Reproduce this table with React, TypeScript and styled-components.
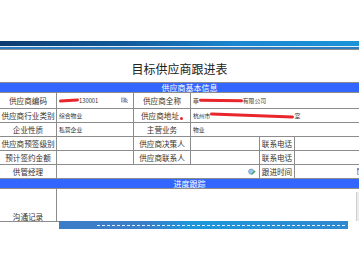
import React from "react";
import styled, { createGlobalStyle } from "styled-components";

const GlobalStyle = createGlobalStyle`
  html, body {
    margin: 0;
    padding: 0;
    background: #fff;
  }
  body {
    font-family: "Noto Sans CJK SC", "Noto Sans", sans-serif;
    overflow: hidden;
  }
`;

const Page = styled.div`
  width: 359px;
  height: 270px;
  overflow: hidden;
`;

const TopSpace = styled.div`
  height: 41px;
`;

const Band = styled.div`
  display: flex;
  flex-direction: column;
`;

const BandStripe = styled.div<{ h: number; bg: string }>`
  height: ${({ h }) => h}px;
  background: ${({ bg }) => bg};
`;

const Frame = styled.div`
  height: 171px;
  overflow: hidden;
`;

const Title = styled.div`
  height: 22px;
  padding-top: 10px;
  line-height: 18px;
  font-size: 12px;
  color: #222;
  text-align: center;
`;

const Table = styled.table`
  width: 380px;
  margin-left: -1px;
  border-collapse: collapse;
  table-layout: fixed;
`;

const Col = styled.col<{ w: number }>`
  width: ${({ w }) => w}px;
`;

const SectionCell = styled.td`
  height: 9px;
  background: #3366ff;
  border-top: 1px solid #8c8c8c;
  border-bottom: 1px solid #8c8c8c;
  color: #fff;
  font-size: 8px;
  line-height: 9px;
  text-align: center;
  padding: 0;
`;

const Row = styled.tr<{ h: number }>`
  height: ${({ h }) => h}px;
`;

const Label = styled.td`
  border: 1px solid #8c8c8c;
  padding: 0;
  font-size: 7.6px;
  line-height: 10px;
  color: #333;
  text-align: center;
  white-space: nowrap;
  overflow: hidden;
`;

const Value = styled.td`
  border: 1px solid #8c8c8c;
  padding: 0 0 0 2px;
  font-size: 5.8px;
  line-height: 10px;
  color: #333;
  white-space: nowrap;
  overflow: hidden;
`;

const ValueLine = styled.div<{ end?: boolean }>`
  display: flex;
  align-items: center;
  justify-content: ${({ end }) => (end ? "flex-end" : "flex-start")};
  padding-right: ${({ end }) => (end ? "3px" : "0")};
`;

const Scribble = styled.span<{ w: number; tilt?: number }>`
  display: inline-block;
  width: ${({ w }) => w}px;
  height: 3px;
  background: #e8262c;
  border-radius: 2px;
  transform: rotate(${({ tilt }) => tilt || 0}deg);
`;

const Dot = styled.span`
  display: inline-block;
  width: 3px;
  height: 3px;
  border-radius: 50%;
  background: #e8262c;
  margin-left: 1px;
  vertical-align: -1px;
`;

const Spacer = styled.span`
  flex: 1;
`;

const TextBox = styled.div`
  width: 303px;
  height: 53px;
  margin-top: 3px;
  display: flex;
  justify-content: flex-end;
`;

const ScrollTrack = styled.div`
  width: 3px;
  background: #ececec;
  border-left: 1px solid #cfcfcf;
`;

const Footer = styled.div`
  display: flex;
`;

const FooterEdge = styled.div`
  width: 59px;
  border-top: 1px solid #8c8c8c;
`;

const FooterBar = styled.div`
  width: 289px;
  height: 8px;
  background: linear-gradient(to right, #3d7dc8 0%, #3b7ec9 30%, #1d97da 45%, #2f88d0 100%);
  display: flex;
  flex-direction: column;
`;

const Dashed = styled.div`
  margin: 4px 3px 0 38px;
  border-top: 1px dashed #e6f2ff;
`;

const LookupIcon = () => (
  <svg width="7" height="7" viewBox="0 0 7 7">
    <rect x="0.5" y="1" width="4" height="4" fill="#c8d4e6" stroke="#7b8aa6" strokeWidth="0.6" />
    <circle cx="4.6" cy="3.4" r="1.5" fill="none" stroke="#5e6f8e" strokeWidth="0.8" />
    <line x1="5.6" y1="4.5" x2="6.6" y2="6" stroke="#5e6f8e" strokeWidth="0.8" />
  </svg>
);

const PersonIcon = () => (
  <svg width="8" height="8" viewBox="0 0 8 8">
    <circle cx="3.2" cy="3.6" r="2.6" fill="#9fc6e8" stroke="#4a7fb5" strokeWidth="0.6" />
    <path d="M4 6.8 L7.6 3.4 L6.6 2.6 L3.2 6 Z" fill="#3aa55a" />
  </svg>
);

const CalendarIcon = () => (
  <svg width="6" height="7" viewBox="0 0 6 7">
    <rect x="0.3" y="0.6" width="5.4" height="6" fill="#dbe6f3" stroke="#6b86ad" strokeWidth="0.6" />
    <rect x="0.3" y="0.6" width="5.4" height="1.6" fill="#6b86ad" />
  </svg>
);

const App: React.FC = () => {
  return (
    <Page>
      <GlobalStyle />
      <TopSpace />
      <Band>
        <BandStripe h={5} bg="linear-gradient(to right, #0c3b6f 0%, #11599a 35%, #1a86cf 65%, #1b93d9 100%)" />
        <BandStripe h={1} bg="#e4eef8" />
        <BandStripe h={2} bg="#2b7cc0" />
        <BandStripe h={1} bg="#8e8e8e" />
      </Band>
      <Frame>
        <Title>目标供应商跟进表</Title>
        <Table>
          <colgroup>
            <Col w={57} />
            <Col w={77} />
            <Col w={57} />
            <Col w={69} />
            <Col w={35} />
            <Col w={85} />
          </colgroup>
          <tbody>
            <tr>
              <SectionCell colSpan={6}>供应商基本信息</SectionCell>
            </tr>
            <Row h={16}>
              <Label>供应商编码</Label>
              <Value>
                <ValueLine>
                  <Scribble w={20} tilt={-4} />
                  130001
                  <Spacer />
                  <LookupIcon />
                  <span style={{ width: 5 }} />
                </ValueLine>
              </Value>
              <Label>供应商全称</Label>
              <Value colSpan={3}>
                <ValueLine>
                  菲<Scribble w={44} tilt={1} />有限公司
                </ValueLine>
              </Value>
            </Row>
            <Row h={14}>
              <Label>供应商行业类别</Label>
              <Value>综合物业</Value>
              <Label>
                供应商地址<Dot />
              </Label>
              <Value colSpan={3}>
                <ValueLine>
                  杭州市<Scribble w={84} tilt={2} />室
                </ValueLine>
              </Value>
            </Row>
            <Row h={14}>
              <Label>企业性质</Label>
              <Value>私营企业</Value>
              <Label>主营业务</Label>
              <Value colSpan={3}>物业</Value>
            </Row>
            <Row h={14}>
              <Label>供应商预签级别</Label>
              <Value />
              <Label>供应商决策人</Label>
              <Value />
              <Label>联系电话</Label>
              <Value />
            </Row>
            <Row h={14}>
              <Label>预计签约金额</Label>
              <Value />
              <Label>供应商联系人</Label>
              <Value />
              <Label>联系电话</Label>
              <Value />
            </Row>
            <Row h={14}>
              <Label>供管经理</Label>
              <Value colSpan={3}>
                <ValueLine end>
                  <PersonIcon />
                </ValueLine>
              </Value>
              <Label>跟进时间</Label>
              <Value>
                <ValueLine>
                  <span style={{ width: 60 }} />
                  <CalendarIcon />
                </ValueLine>
              </Value>
            </Row>
            <tr>
              <SectionCell colSpan={6}>进度跟踪</SectionCell>
            </tr>
            <Row h={56}>
              <Label>沟通记录</Label>
              <Value colSpan={5} style={{ verticalAlign: "top", padding: 0 }}>
                <TextBox>
                  <ScrollTrack />
                </TextBox>
              </Value>
            </Row>
          </tbody>
        </Table>
      </Frame>
      <Footer>
        <FooterEdge />
        <FooterBar>
          <Dashed />
        </FooterBar>
      </Footer>
    </Page>
  );
};

export default App;
